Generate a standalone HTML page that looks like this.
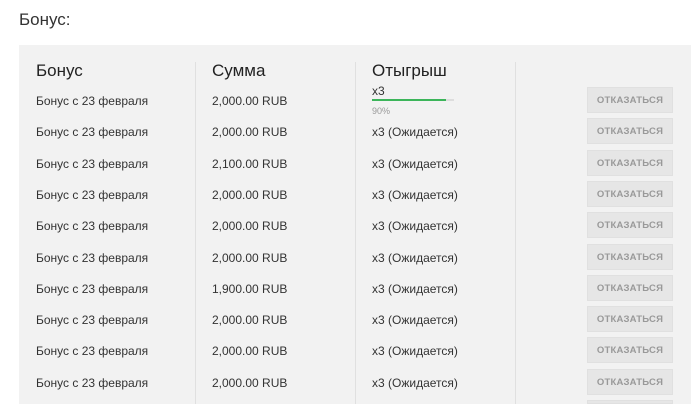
<!DOCTYPE html>
<html style="width:700px;height:404px;overflow:hidden"><head><meta charset="utf-8"><style>
body{margin:0;width:700px;height:404px;overflow:hidden;background:#fff;font-family:"Liberation Sans",sans-serif;color:#222;position:relative}
.t{position:absolute;left:19px;top:10px;font-size:17px;color:#333}
.p{position:absolute;left:19px;top:45px;width:672px;height:359px;background:#f2f2f2}
.v{position:absolute;top:62px;width:1px;height:342px;background:#e0e0e0}
.h{position:absolute;top:61px;font-size:17px;color:#222}
.c{position:absolute;font-size:12px;color:#333;line-height:14px}
.b{position:absolute;left:587px;width:86px;height:26px;background:#e6e6e6;border:1px solid #e0e0e0;box-sizing:border-box;font-size:9.5px;font-weight:bold;color:#999;text-align:center;line-height:25px;letter-spacing:.2px}
</style></head><body>
<div class="t">Бонус:</div>
<div class="p"></div>
<div class="v" style="left:195px"></div><div class="v" style="left:355px"></div><div class="v" style="left:515px"></div>
<div class="h" style="left:36px">Бонус</div>
<div class="h" style="left:212px">Сумма</div>
<div class="h" style="left:372px">Отыгрыш</div>
<div class="c" style="left:372px;top:84px">x3</div>
<div style="position:absolute;left:372px;top:99px;width:82px;height:2px;background:#ddd"><div style="width:74px;height:2px;background:#3cb55a"></div></div>
<div class="c" style="left:372px;top:104px;font-size:9px;color:#999">90%</div>
<div id="rows"></div>
<script>
var s=["2,000.00","2,000.00","2,100.00","2,000.00","2,000.00","2,000.00","1,900.00","2,000.00","2,000.00","2,000.00"],h="";
for(var i=0;i<10;i++){var y=94+i*31.3;
h+='<div class="c" style="left:36px;top:'+y+'px">Бонус с 23 февраля</div><div class="c" style="left:212px;top:'+y+'px">'+s[i]+' RUB</div>';
if(i>0)h+='<div class="c" style="left:372px;top:'+y+'px">x3 (Ожидается)</div>';
h+='<div class="b" style="top:'+(i==0?87:y-7)+'px">ОТКАЗАТЬСЯ</div>';}
h+='<div class="b" style="top:400px;height:4px"></div>';
document.getElementById('rows').innerHTML=h;
</script>
</body></html>
